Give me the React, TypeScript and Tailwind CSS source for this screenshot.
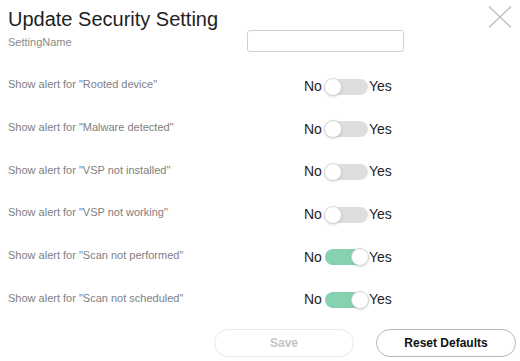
import { useState } from 'react';

type Row = { label: string; on: boolean };

const initialRows: Row[] = [
  { label: 'Show alert for "Rooted device"', on: false },
  { label: 'Show alert for "Malware detected"', on: false },
  { label: 'Show alert for "VSP not installed"', on: false },
  { label: 'Show alert for "VSP not working"', on: false },
  { label: 'Show alert for "Scan not performed"', on: true },
  { label: 'Show alert for "Scan not scheduled"', on: true },
];

function Toggle({ on, onClick }: { on: boolean; onClick: () => void }) {
  return (
    <button
      onClick={onClick}
      className={`relative w-[43px] h-[16px] rounded-full ${on ? 'bg-[#86d1b0]' : 'bg-[#dedede]'}`}
    >
      <span
        className={`absolute top-[-1px] w-[18px] h-[18px] rounded-full bg-white border border-[#d6d6d6] shadow-sm ${
          on ? 'right-[-1px]' : 'left-[-1px]'
        }`}
      />
    </button>
  );
}

export default function App() {
  const [rows, setRows] = useState(initialRows);
  const [name, setName] = useState('');

  const flip = (index: number) => {
    setRows(rows.map((r, i) => (i === index ? { ...r, on: !r.on } : r)));
  };

  return (
    <div
      className="w-[520px] h-[361px] bg-white relative overflow-hidden"
      style={{ fontFamily: '"Liberation Sans", Arial, sans-serif' }}
    >
      <button className="absolute left-[488px] top-[6px] w-[24px] h-[22px] text-[#bdbdbd]">
        <svg viewBox="0 0 24 22" className="w-full h-full" fill="none" stroke="currentColor" strokeWidth="1.3">
          <path d="M1 0.5 L23 21.5 M23 0.5 L1 21.5" />
        </svg>
      </button>

      <div className="pl-[8px] pt-[7px]">
        <h1 className="text-[20px] leading-[24px] text-[#1e1e1e]">Update Security Setting</h1>

        <div className="grid grid-cols-[239px_1fr] items-center h-[22px] -mt-[1px]">
          <span className="text-[11px] text-[#8a8a8a] mt-[2px]">SettingName</span>
          <input
            value={name}
            onChange={(e) => setName(e.target.value)}
            className="w-[157px] h-[22px] border border-[#cfcfcf] rounded-[3px] outline-none px-2 text-[12px]"
          />
        </div>

        <div className="mt-[24px] flex flex-col gap-[22px]">
          {rows.map((row, index) => (
            <div key={index} className="grid grid-cols-[239px_1fr] items-center h-[20.7px]">
              <span className="text-[11px] text-[#808080] -mt-[4px]">{row.label}</span>
              <div className="flex items-center pl-[57px] text-[14px] text-[#1e1e1e]">
                <span className="mr-[3px]">No</span>
                <Toggle on={row.on} onClick={() => flip(index)} />
                <span className="ml-[1px]">Yes</span>
              </div>
            </div>
          ))}
        </div>
      </div>

      <div className="absolute right-[4px] bottom-[4px] flex gap-[22px]">
        <button className="w-[140px] h-[28px] rounded-full border border-[#e8e8e8] text-[12px] font-bold text-[#c4c4c4]">
          Save
        </button>
        <button className="w-[140px] h-[28px] rounded-full border border-[#b8b8b8] text-[12px] font-bold text-[#111]">
          Reset Defaults
        </button>
      </div>
    </div>
  );
}
